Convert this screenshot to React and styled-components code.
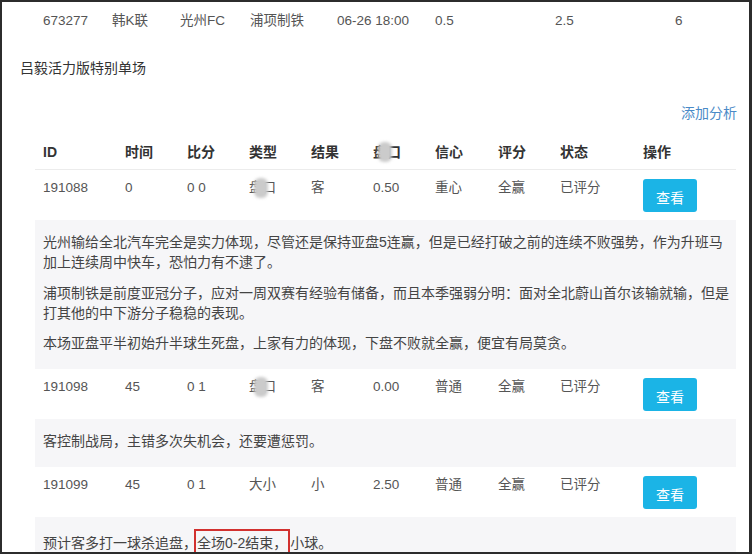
import React from "react";
import styled, { createGlobalStyle } from "styled-components";

const Global = createGlobalStyle`
  html, body { margin: 0; padding: 0; background: #2c2c2c; }
  body { font-family: "Liberation Sans", "Noto Sans CJK SC", sans-serif; }
  * { box-sizing: border-box; }
`;

const Frame = styled.div`
  margin: 2px 3px 2px 2px;
  width: 747px;
  height: 550px;
  overflow: hidden;
  background: #fff;
  padding-top: 9px;
`;

const TopRow = styled.div`
  display: grid;
  grid-template-columns: 69px 68px 70px 87px 98px 120px 120px 60px;
  padding-left: 41px;
  font-size: 13.5px;
  line-height: 20px;
  color: #555;
`;

const Title = styled.div`
  margin: 27px 0 0 18px;
  font-size: 14px;
  line-height: 20px;
  color: #333;
`;

const ActionBar = styled.div`
  display: flex;
  justify-content: flex-end;
  margin-top: 25px;
  padding-right: 12px;
`;

const AddLink = styled.a`
  font-size: 14px;
  line-height: 20px;
  color: #4a8ac7;
  text-decoration: none;
`;

const Table = styled.table`
  margin: 11px 0 0 33px;
  width: 701px;
  table-layout: fixed;
  border-collapse: collapse;
  font-size: 13.5px;
  color: #555;
`;

const Th = styled.th`
  text-align: left;
  font-weight: bold;
  font-size: 14px;
  color: #333;
  line-height: 20px;
  padding: 8px 8px 7px;
  border-bottom: 1px solid #ececec;
  white-space: nowrap;
`;

const Td = styled.td`
  vertical-align: top;
  line-height: 20px;
  padding: 8px;
  white-space: nowrap;
`;

const DescCell = styled.td`
  background: #f6f6f8;
  padding: 12px 0 16px 8px;
  font-size: 14px;
  line-height: 20px;
  color: #444;
  & p { margin: 0; }
  & p + p { margin-top: 10.5px; }
`;

const ViewButton = styled.button`
  margin-top: 1px;
  width: 54px;
  height: 33px;
  border: none;
  border-radius: 3px;
  background: #1bb4e6;
  color: #fff;
  font-family: inherit;
  font-size: 14px;
  padding: 2px 0 0;
`;

const Masked = styled.span`
  position: relative;
  display: inline-block;
`;

const Blob = styled.span`
  position: absolute;
  left: 5px;
  top: 0px;
  width: 14px;
  height: 20px;
  border-radius: 6px;
  background: #cbcbcb;
  filter: blur(1.5px);
`;

const Highlight = styled.span`
  display: inline-block;
  border: 2px solid #d2312f;
  padding: 2px 1px;
  margin-left: -3px;
  line-height: 20px;
`;

const cols = [82, 62, 62, 62, 62, 62, 63, 62, 83, 101];

const MaskedWord = ({ text }) => (
  <Masked>
    {text}
    <Blob />
  </Masked>
);

const rows = [
  {
    id: "191088", time: "0", score: "0 0", type: <MaskedWord text="盘口" />, result: "客", line: "0.50",
    conf: "重心", rate: "全赢", status: "已评分",
    desc: [
      <>光州输给全北汽车完全是实力体现，尽管还是保持亚盘5连赢，但是已经打破之前的连续不败强势，作为升班马<br />加上连续周中快车，恐怕力有不逮了。</>,
      <>浦项制铁是前度亚冠分子，应对一周双赛有经验有储备，而且本季强弱分明：面对全北蔚山首尔该输就输，但是<br />打其他的中下游分子稳稳的表现。</>,
      "本场亚盘平半初始升半球生死盘，上家有力的体现，下盘不败就全赢，便宜有局莫贪。",
    ],
  },
  {
    id: "191098", time: "45", score: "0 1", type: <MaskedWord text="盘口" />, result: "客", line: "0.00",
    conf: "普通", rate: "全赢", status: "已评分",
    desc: ["客控制战局，主错多次失机会，还要遭惩罚。"],
  },
  {
    id: "191099", time: "45", score: "0 1", type: "大小", result: "小", line: "2.50",
    conf: "普通", rate: "全赢", status: "已评分",
    desc: [
      <>预计客多打一球杀追盘，<Highlight>全场0-2结束，</Highlight>小球。</>,
    ],
  },
];

export default function App() {
  return (
    <>
      <Global />
      <Frame>
        <TopRow>
          <span>673277</span>
          <span>韩K联</span>
          <span>光州FC</span>
          <span>浦项制铁</span>
          <span>06-26 18:00</span>
          <span>0.5</span>
          <span>2.5</span>
          <span>6</span>
        </TopRow>
        <Title>吕毅活力版特别单场</Title>
        <ActionBar>
          <AddLink href="#">添加分析</AddLink>
        </ActionBar>
        <Table>
          <colgroup>
            {cols.map((w, i) => (
              <col key={i} style={{ width: w }} />
            ))}
          </colgroup>
          <thead>
            <tr>
              <Th>ID</Th>
              <Th>时间</Th>
              <Th>比分</Th>
              <Th>类型</Th>
              <Th>结果</Th>
              <Th><MaskedWord text="盘口" /></Th>
              <Th>信心</Th>
              <Th>评分</Th>
              <Th>状态</Th>
              <Th>操作</Th>
            </tr>
          </thead>
          <tbody>
            {rows.map((r) => (
              <React.Fragment key={r.id}>
                <tr>
                  <Td>{r.id}</Td>
                  <Td>{r.time}</Td>
                  <Td>{r.score}</Td>
                  <Td>{r.type}</Td>
                  <Td>{r.result}</Td>
                  <Td>{r.line}</Td>
                  <Td>{r.conf}</Td>
                  <Td>{r.rate}</Td>
                  <Td>{r.status}</Td>
                  <Td><ViewButton>查看</ViewButton></Td>
                </tr>
                <tr>
                  <DescCell colSpan={10}>
                    {r.desc.map((p, i) => (
                      <p key={i}>{p}</p>
                    ))}
                  </DescCell>
                </tr>
              </React.Fragment>
            ))}
          </tbody>
        </Table>
      </Frame>
    </>
  );
}
